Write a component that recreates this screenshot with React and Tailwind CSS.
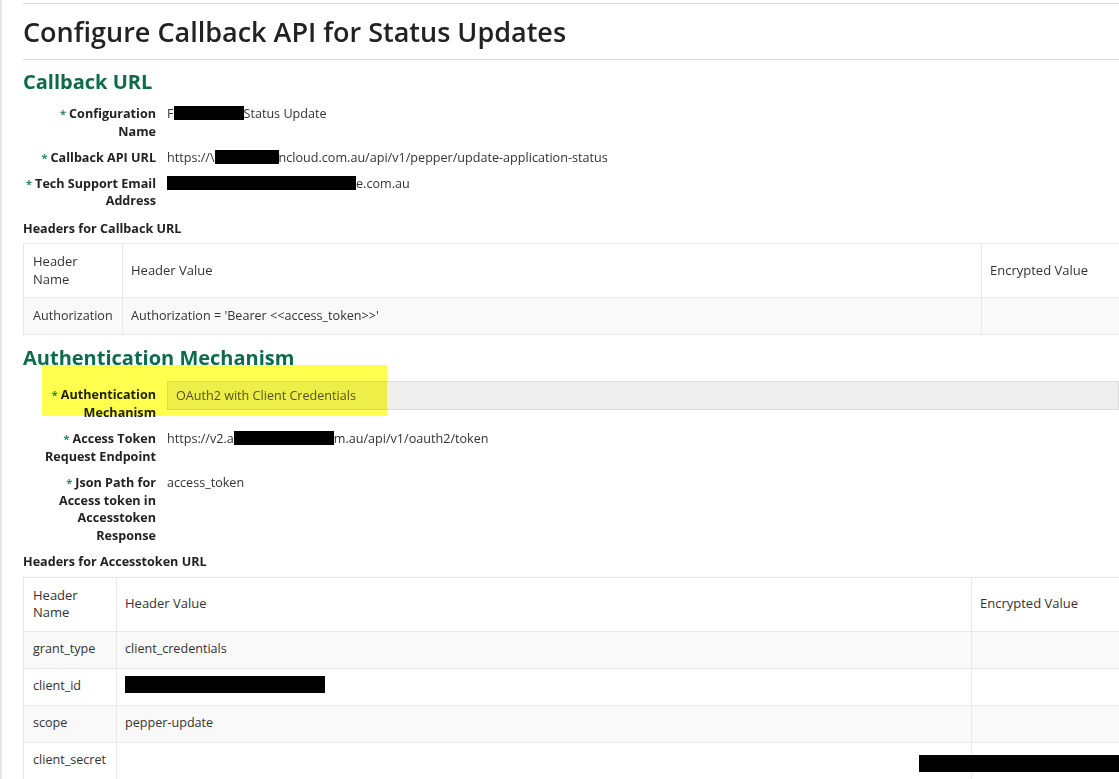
const Redact = ({ w }) => (
  <span className={`inline-block h-[14px] bg-black align-[-2px] ${w}`} />
);

const Field = ({ label, children, className = "" }) => (
  <div className={`grid grid-cols-[134px_1fr] gap-x-[11px] -ml-[1px] ${className}`}>
    <div className="text-right font-bold text-[#222] leading-[17.5px]">
      <span className="text-[#2e8b62] text-[11px] mr-[3px]">*</span>
      {label}
    </div>
    <div className="leading-[17.5px]">{children}</div>
  </div>
);

const Cell = ({ children, className = "" }) => (
  <td className={`border border-[#e8e8e8] px-[8px] align-middle ${className}`}>{children}</td>
);

const HeadersTable = ({ rows, c1, c2 }) => (
  <table className="border-collapse w-[1160px] table-fixed">
    <colgroup>
      <col className={c1} />
      <col className={c2} />
      <col />
    </colgroup>
    <thead>
      <tr className="h-[54px] bg-white text-left text-[13px]">
        <Cell className="leading-[17.5px] pl-[9px]">Header<br />Name</Cell>
        <Cell>Header Value</Cell>
        <Cell>Encrypted Value</Cell>
      </tr>
    </thead>
    <tbody>
      {rows.map((r, i) => (
        <tr key={i} className={`${i % 2 === 0 ? "bg-[#f9f9f9]" : "bg-white"} h-[37px]`}>
          <Cell className="pl-[9px]">{r.name}</Cell>
          <Cell>{r.value}</Cell>
          <Cell />
        </tr>
      ))}
    </tbody>
  </table>
);

export default function App() {
  return (
    <div className="min-h-screen w-[1119px] overflow-hidden bg-white font-['Open_Sans',sans-serif] text-[12.6px] text-[#333] border-l-2 border-[#e6e6e6]">
      <div className="pl-[21px] pt-[3px]">
        <div className="border-t border-[#dcdcdc]" />
        <h1 className="text-[27px] font-semibold leading-[34px] text-[#222] mt-[11px] mb-[10px]">
          Configure Callback API for Status Updates
        </h1>
        <div className="border-t border-[#dcdcdc]" />
        <h2 className="text-[20px] font-bold text-[#0b6b4b] leading-[26px] mt-[9px]">Callback URL</h2>

        <Field label="Configuration Name" className="mt-[10px]">
          F<Redact w="w-[70px]" />Status Update
        </Field>
        <Field label="Callback API URL" className="mt-[9px]">
          https://\<Redact w="w-[64px]" />ncloud.com.au/api/v1/pepper/update-application-status
        </Field>
        <Field label="Tech Support Email Address" className="mt-[8px]">
          <Redact w="w-[189px]" />e.com.au
        </Field>

        <div className="font-bold text-[#222] mt-[10px] mb-[6px] leading-[17.5px]">Headers for Callback URL</div>
        <HeadersTable
          c1="w-[99px]"
          c2="w-[859px]"
          rows={[{ name: "Authorization", value: "Authorization = 'Bearer <<access_token>>'" }]}
        />

        <h2 className="text-[20px] font-bold text-[#0b6b4b] leading-[26px] mt-[10px]">Authentication Mechanism</h2>

        <div className="relative mt-[15px]">
          <Field label="Authentication Mechanism">
            <div className="h-[29px] -mt-[5px] bg-[#eeeeee] border border-[#dddddd] pl-[8px] flex items-center text-[#555]">
              OAuth2 with Client Credentials
            </div>
          </Field>
          <div className="absolute left-[19px] top-[-21px] w-[345px] h-[51px] bg-[#ffff4d] mix-blend-multiply" />
        </div>

        <Field label="Access Token Request Endpoint" className="mt-[9px]">
          https://v2.a<Redact w="w-[100px]" />m.au/api/v1/oauth2/token
        </Field>
        <Field label="Json Path for Access token in Accesstoken Response" className="mt-[9px]">
          access_token
        </Field>

        <div className="font-bold text-[#222] mt-[9px] mb-[6px] leading-[17.5px]">Headers for Accesstoken URL</div>
        <div className="relative">
          <HeadersTable
            c1="w-[93px]"
            c2="w-[855px]"
            rows={[
              { name: "grant_type", value: "client_credentials" },
              { name: "client_id", value: <Redact w="w-[200px] h-[17px]" /> },
              { name: "scope", value: "pepper-update" },
              { name: "client_secret", value: "" },
            ]}
          />
          <div className="absolute left-[896px] top-[178px] w-[230px] h-[17px] bg-black" />
        </div>
      </div>
    </div>
  );
}
